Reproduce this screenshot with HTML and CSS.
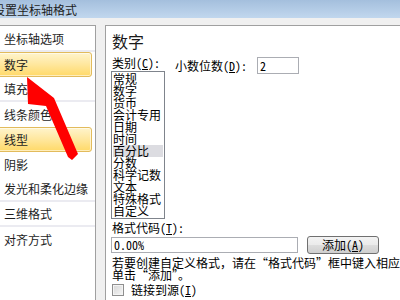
FILE: index.html
```html
<!DOCTYPE html>
<html lang="zh-CN">
<head>
<meta charset="utf-8">
<title>设置坐标轴格式</title>
<link rel="stylesheet" href="styles.css">
</head>
<body>
<div class="titlebar"><span class="title">设置坐标轴格式</span></div>
<div class="band"></div>
<div class="main">
  <nav class="nav">
    <div class="item sep">坐标轴选项</div>
    <div class="item sel">数字</div>
    <div class="item sep">填充</div>
    <div class="item">线条颜色</div>
    <div class="item sel">线型</div>
    <div class="item">阴影</div>
    <div class="item sep">发光和柔化边缘</div>
    <div class="item sep">三维格式</div>
    <div class="item">对齐方式</div>
  </nav>
  <section class="panel">
    <h2 class="heading">数字</h2>
    <div class="top">
      <div class="cat">
        <div class="cat-label">类别(<u>C</u>):</div>
        <div class="listbox">
          <div class="opt">常规</div>
          <div class="opt">数字</div>
          <div class="opt">货币</div>
          <div class="opt">会计专用</div>
          <div class="opt">日期</div>
          <div class="opt">时间</div>
          <div class="opt hl">百分比</div>
          <div class="opt">分数</div>
          <div class="opt">科学记数</div>
          <div class="opt">文本</div>
          <div class="opt">特殊格式</div>
          <div class="opt">自定义</div>
        </div>
      </div>
      <div class="dec">
        <span>小数位数(<u>D</u>):</span>
        <div class="field small">2</div>
      </div>
    </div>
    <div class="code-label">格式代码(<u>T</u>):</div>
    <div class="code-row">
      <div class="field wide">0.00%</div>
      <div class="button">添加(<u>A</u>)</div>
    </div>
    <div class="help">若要创建自定义格式，请在“格式代码”框中键入相应<br>单击“添加”。</div>
    <div class="check-row">
      <span class="checkbox"></span>
      <span class="check-label">链接到源(<u>I</u>)</span>
    </div>
  </section>
</div>
<svg class="arrow" width="400" height="300" viewBox="0 0 400 300">
  <polygon points="27,77 28,104 46,106 68,157 72,160 78,154 54,98" fill="#ff0000"/>
</svg>
</body>
</html>
```
FILE: styles.css
```css
html, body {
  margin: 0;
  padding: 0;
}
body {
  width: 400px;
  height: 300px;
  overflow: hidden;
  background: #f0f0f0;
  position: relative;
  font-family: "Noto Sans CJK SC", sans-serif;
  color: #1a1a1a;
}
.titlebar {
  height: 18px;
  background: linear-gradient(to bottom, #a4bfdd, #c1d7ee);
  overflow: hidden;
  white-space: nowrap;
}
.title {
  display: block;
  margin-left: -7px;
  font-size: 12px;
  line-height: 20px;
  color: #1e1e1e;
}
.band {
  height: 7px;
  background: #f0f0f0;
}
.main {
  display: flex;
  gap: 9px;
  height: 275px;
}
.nav {
  width: 96px;
  flex: none;
  box-sizing: border-box;
  background: #fff;
  border-top: 1px solid #a0a0a0;
  border-right: 1px solid #a0a0a0;
  padding-top: 1px;
  overflow: hidden;
}
.item {
  height: 25px;
  box-sizing: border-box;
  display: flex;
  align-items: center;
  padding-left: 4px;
  font-size: 12px;
  color: #1e1e1e;
  white-space: nowrap;
}
.item.sep {
  border-bottom: 2px solid #ebebf1;
}
.item.sel {
  margin: 0 3px 0 -3px;
  padding-left: 6px;
  border: 1px solid #e2bb5c;
  border-radius: 3px;
  background: linear-gradient(to bottom, #fff4cc, #ffe79d 50%, #ffd968);
  box-shadow: inset 0 0 0 1px rgba(255, 255, 255, 0.55);
}
.panel {
  flex: 1;
  min-width: 0;
  box-sizing: border-box;
  background: #fff;
  border-left: 1px solid #a0a0a0;
  border-top: 1px solid #a0a0a0;
  padding: 5px 0 0 6px;
  overflow: hidden;
  font-family: "Noto Sans Mono CJK SC", "Noto Sans CJK SC", monospace;
  font-size: 12px;
  line-height: 16px;
  color: #000;
}
.heading {
  margin: 0;
  font-family: "Noto Sans CJK SC", sans-serif;
  font-size: 16px;
  line-height: 20px;
  font-weight: normal;
  color: #1a1a1a;
}
.top {
  display: flex;
  align-items: flex-start;
}
.cat {
  width: 54px;
  margin-left: -1px;
  flex: none;
}
.cat-label {
  margin-top: 4px;
  padding-left: 1px;
  white-space: nowrap;
}
.listbox {
  height: 148px;
  box-sizing: border-box;
  border: 1px solid #7f848c;
  padding: 1px 1px 0 1px;
  overflow: hidden;
}
.opt {
  line-height: 12px;
  height: 12px;
  white-space: nowrap;
}
.opt.hl {
  background: #dcdce1;
}
.dec {
  display: flex;
  align-items: center;
  margin-left: 10px;
  margin-top: 6px;
  gap: 10px;
  white-space: nowrap;
}
.field {
  box-sizing: border-box;
  border: 1px solid #abadb3;
  background: #fff;
  padding-left: 2px;
  white-space: nowrap;
}
.field.small {
  width: 42px;
  height: 17px;
  line-height: 15px;
}
.code-label {
  margin-top: 1px;
  white-space: nowrap;
}
.code-row {
  display: flex;
  align-items: center;
  height: 18px;
}
.field.wide {
  width: 187px;
  height: 16px;
  line-height: 14px;
  margin-left: -1px;
}
.button {
  margin-left: 9px;
  width: 72px;
  height: 18px;
  box-sizing: border-box;
  border: 1px solid #707070;
  border-radius: 3px;
  background: linear-gradient(to bottom, #f3f3f3, #ebebeb 48%, #dddddd 52%, #cfcfcf);
  text-align: center;
  line-height: 16px;
  white-space: nowrap;
}
.help {
  margin-top: 3px;
  line-height: 12px;
  white-space: nowrap;
}
.check-row {
  display: flex;
  align-items: center;
  margin-top: 3px;
  height: 12px;
}
.checkbox {
  width: 12px;
  height: 12px;
  box-sizing: border-box;
  border: 1px solid #8f8f8f;
  background: linear-gradient(135deg, #d6d6d6, #f6f6f6);
  box-shadow: inset 0 0 0 1px #f4f4f4;
}
.check-label {
  margin-left: 7px;
  white-space: nowrap;
}
.arrow {
  position: absolute;
  left: 0;
  top: 0;
  pointer-events: none;
}
```
